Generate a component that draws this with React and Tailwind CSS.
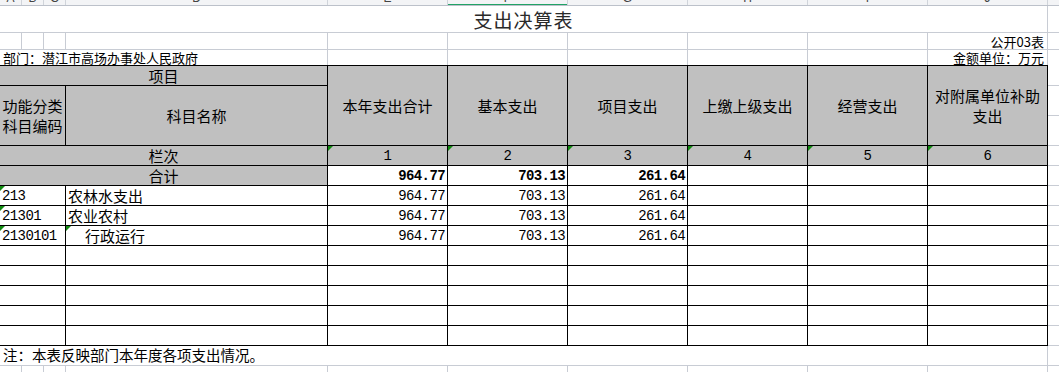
const cjk = { fontFamily: '"Noto Sans CJK SC", "Noto Sans", sans-serif' };

const sheetCols = [
  { w: 'w-[22px]', l: 'A' },
  { w: 'w-[22px]', l: 'B' },
  { w: 'w-[22px]', l: 'C' },
  { w: 'w-[262px]', l: 'D' },
  { w: 'w-[120px]', l: 'E' },
  { w: 'w-[120px]', l: 'F' },
  { w: 'w-[120px]', l: 'G' },
  { w: 'w-[120px]', l: 'H' },
  { w: 'w-[120px]', l: 'I' },
  { w: 'w-[120px]', l: 'J' },
];

const heads = ['本年支出合计', '基本支出', '项目支出', '上缴上级支出', '经营支出', '对附属单位补助支出'];

const rows = [
  { code: '213', name: '农林水支出', vals: ['964.77', '703.13', '261.64'], mark: false, indent: false },
  { code: '21301', name: '农业农村', vals: ['964.77', '703.13', '261.64'], mark: false, indent: false },
  { code: '2130101', name: '行政运行', vals: ['964.77', '703.13', '261.64'], mark: true, indent: true },
];

function Mark() {
  return (
    <span className="absolute top-0 left-0 w-0 h-0 border-t-[5px] border-r-[5px] border-t-[#118a11] border-r-transparent" />
  );
}

function Cell({ className = '', children }) {
  return (
    <div className={`relative border-r border-b border-black flex items-center ${className}`}>
      {children}
    </div>
  );
}

function Num({ v, bold }) {
  return (
    <span className={`font-['Liberation_Mono',monospace] text-[14px] tracking-[-0.6px] ${bold ? 'font-bold' : ''}`}>{v}</span>
  );
}

export default function App() {
  return (
    <div className="w-[1059px] h-[372px] bg-white overflow-hidden text-black" style={cjk}>
      {/* column letters strip */}
      <div className="flex h-[6px] bg-[#f3f4f6] border-b border-[#bcc1ca]">
        {sheetCols.map((c) => (
          <div key={c.l} className={`relative ${c.w} shrink-0 border-r border-[#d0d4da] overflow-hidden flex justify-center`}>
            <span className="text-[12px] leading-[12px] -mt-[8px] text-[#444] font-['Liberation_Sans',sans-serif]">{c.l}</span>
            {c.l === 'F' && <span className="absolute left-0 right-0 bottom-[-1px] h-[2px] bg-[#21a366]" />}
          </div>
        ))}
        <div className="flex-1" />
      </div>

      {/* title row */}
      <div className="flex h-[27px] border-b border-[#c8ccd4]">
        <div className="w-[1048px] shrink-0 border-r border-[#c8ccd4] flex items-center justify-center">
          <span className="text-[19px] leading-none text-[#2a2a2a] tracking-[1px]">支出决算表</span>
        </div>
        <div className="flex-1" />
      </div>

      {/* 公开03表 row */}
      <div className="flex h-[17px] border-b border-[#c8ccd4]">
        {sheetCols.map((c) => (
          <div key={c.l} className={`${c.w} shrink-0 border-r border-[#c8ccd4] flex items-center justify-end pr-[3px]`}>
            {c.l === 'J' && <span className="text-[13px] leading-[13px]">公开03表</span>}
          </div>
        ))}
        <div className="flex-1" />
      </div>

      {/* 部门 row */}
      <div className="flex h-[15px]">
        <div className="w-[328px] shrink-0 border-r border-[#c8ccd4] flex items-center pl-[3px]">
          <span className="text-[13px] leading-[13px]">部门：潜江市高场办事处人民政府</span>
        </div>
        {sheetCols.slice(4).map((c) => (
          <div key={c.l} className={`${c.w} shrink-0 border-r border-[#c8ccd4] flex items-center justify-end pr-[3px]`}>
            {c.l === 'J' && <span className="text-[13px] leading-[13px] whitespace-nowrap">金额单位：万元</span>}
          </div>
        ))}
        <div className="flex-1" />
      </div>

      {/* table */}
      <div className="flex">
        <div className="w-[1048px] shrink-0 border-t border-black grid grid-cols-[66px_262px_120px_120px_120px_120px_120px_120px] grid-rows-[20px_60px_repeat(10,20px)] text-[15px] leading-[18px]">
          <Cell className="col-span-2 bg-[#c0c0c0] justify-center">项目</Cell>
          {heads.map((h, i) => (
            <Cell key={h} className={`row-span-2 bg-[#c0c0c0] justify-center text-center ${i === 5 ? 'px-[4px]' : ''}`}>
              <span className="leading-[20px]">{h}</span>
            </Cell>
          ))}
          <Cell className="bg-[#c0c0c0] justify-center">
            <span className="leading-[20px] w-[62px] text-center">功能分类科目编码</span>
          </Cell>
          <Cell className="bg-[#c0c0c0] justify-center">科目名称</Cell>

          <Cell className="col-span-2 bg-[#c0c0c0] justify-center">栏次</Cell>
          {[1, 2, 3, 4, 5, 6].map((n) => (
            <Cell key={n} className="bg-[#c0c0c0] justify-center">
              <Mark />
              <Num v={n} />
            </Cell>
          ))}

          <Cell className="col-span-2 bg-[#c0c0c0] justify-center">合计</Cell>
          <Cell className="justify-end pr-[2px]"><Num v="964.77" bold /></Cell>
          <Cell className="justify-end pr-[2px]"><Num v="703.13" bold /></Cell>
          <Cell className="justify-end pr-[2px]"><Num v="261.64" bold /></Cell>
          <Cell />
          <Cell />
          <Cell />

          {rows.map((r) => (
            <div key={r.code} className="contents">
              <Cell className="pl-[2px]">
                <Mark />
                <Num v={r.code} />
              </Cell>
              <Cell className={r.indent ? 'pl-[19px]' : 'pl-[2px]'}>
                {r.mark && <Mark />}
                {r.name}
              </Cell>
              {r.vals.map((v, i) => (
                <Cell key={i} className="justify-end pr-[2px]"><Num v={v} /></Cell>
              ))}
              <Cell />
              <Cell />
              <Cell />
            </div>
          ))}

          {[0, 1, 2, 3, 4].map((k) => (
            <div key={k} className="contents">
              {[0, 1, 2, 3, 4, 5, 6, 7].map((j) => (
                <Cell key={j} />
              ))}
            </div>
          ))}
        </div>
        <div className="flex-1 flex flex-col">
          <div className="h-[21px] border-b border-[#c8ccd4]" />
          <div className="h-[30px] border-b border-[#c8ccd4]" />
          <div className="h-[30px] border-b border-[#c8ccd4]" />
          {[0, 1, 2, 3, 4, 5, 6, 7, 8, 9].map((k) => (
            <div key={k} className="h-[20px] border-b border-[#c8ccd4]" />
          ))}
        </div>
      </div>

      {/* note row */}
      <div className="flex h-[20px] border-b border-[#c8ccd4]">
        <div className="w-[1048px] shrink-0 border-r border-[#c8ccd4] flex items-center pl-[3px]">
          <span className="text-[14.5px] leading-none">注：本表反映部门本年度各项支出情况。</span>
        </div>
        <div className="flex-1" />
      </div>

      {/* next empty row */}
      <div className="flex h-[20px] border-b border-[#c8ccd4]">
        {sheetCols.map((c) => (
          <div key={c.l} className={`${c.w} shrink-0 border-r border-[#c8ccd4]`} />
        ))}
        <div className="flex-1" />
      </div>
    </div>
  );
}
